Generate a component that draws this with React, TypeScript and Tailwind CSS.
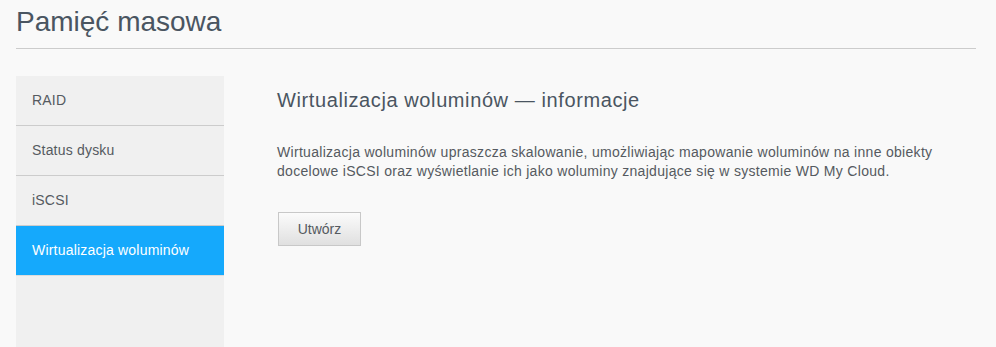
export default function App() {
  const items = ["RAID", "Status dysku", "iSCSI", "Wirtualizacja woluminów"];
  return (
    <div className="h-[347px] w-[996px] overflow-hidden bg-[#f9f9f9] pl-4 pr-5 font-['Liberation_Sans',Arial,sans-serif]">
      <div className="border-b border-[#cccccc] pb-[10px] pt-[6px]">
        <h1 className="text-[28px] leading-[32px] text-[#4a5561]">Pamięć masowa</h1>
      </div>
      <div className="mt-[27px] flex">
        <div className="h-[300px] w-[208px] shrink-0 bg-[#f0f0f0]">
          {items.map((it, i) => (
            <div
              key={it}
              className={
                i === 3
                  ? "flex h-[50px] items-center border-b border-[#dcdcdc] bg-[#15a9fc] pl-4 text-[14px] tracking-[0.2px] text-white"
                  : "flex h-[50px] items-center border-b border-[#cccccc] pl-4 text-[14px] tracking-[0.2px] text-[#555a60]"
              }
            >
              {it}
            </div>
          ))}
        </div>
        <div className="pl-[53px] pt-[12px]">
          <h2 className="text-[20px] leading-[24px] tracking-[0.6px] text-[#4a5561]">Wirtualizacja woluminów — informacje</h2>
          <p className="mt-[31px] w-[700px] text-[14px] leading-[19px] tracking-[0.3px] text-[#555a60]">
            Wirtualizacja woluminów upraszcza skalowanie, umożliwiając mapowanie woluminów na inne obiekty
            <br />
            docelowe iSCSI oraz wyświetlanie ich jako woluminy znajdujące się w systemie WD My Cloud.
          </p>
          <button className="ml-px mt-[31px] h-[34px] w-[83px] border border-[#c8c8c8] bg-gradient-to-b from-[#fbfbfb] to-[#e0e0e0] text-[14px] text-[#555a60]">
            Utwórz
          </button>
        </div>
      </div>
    </div>
  );
}
